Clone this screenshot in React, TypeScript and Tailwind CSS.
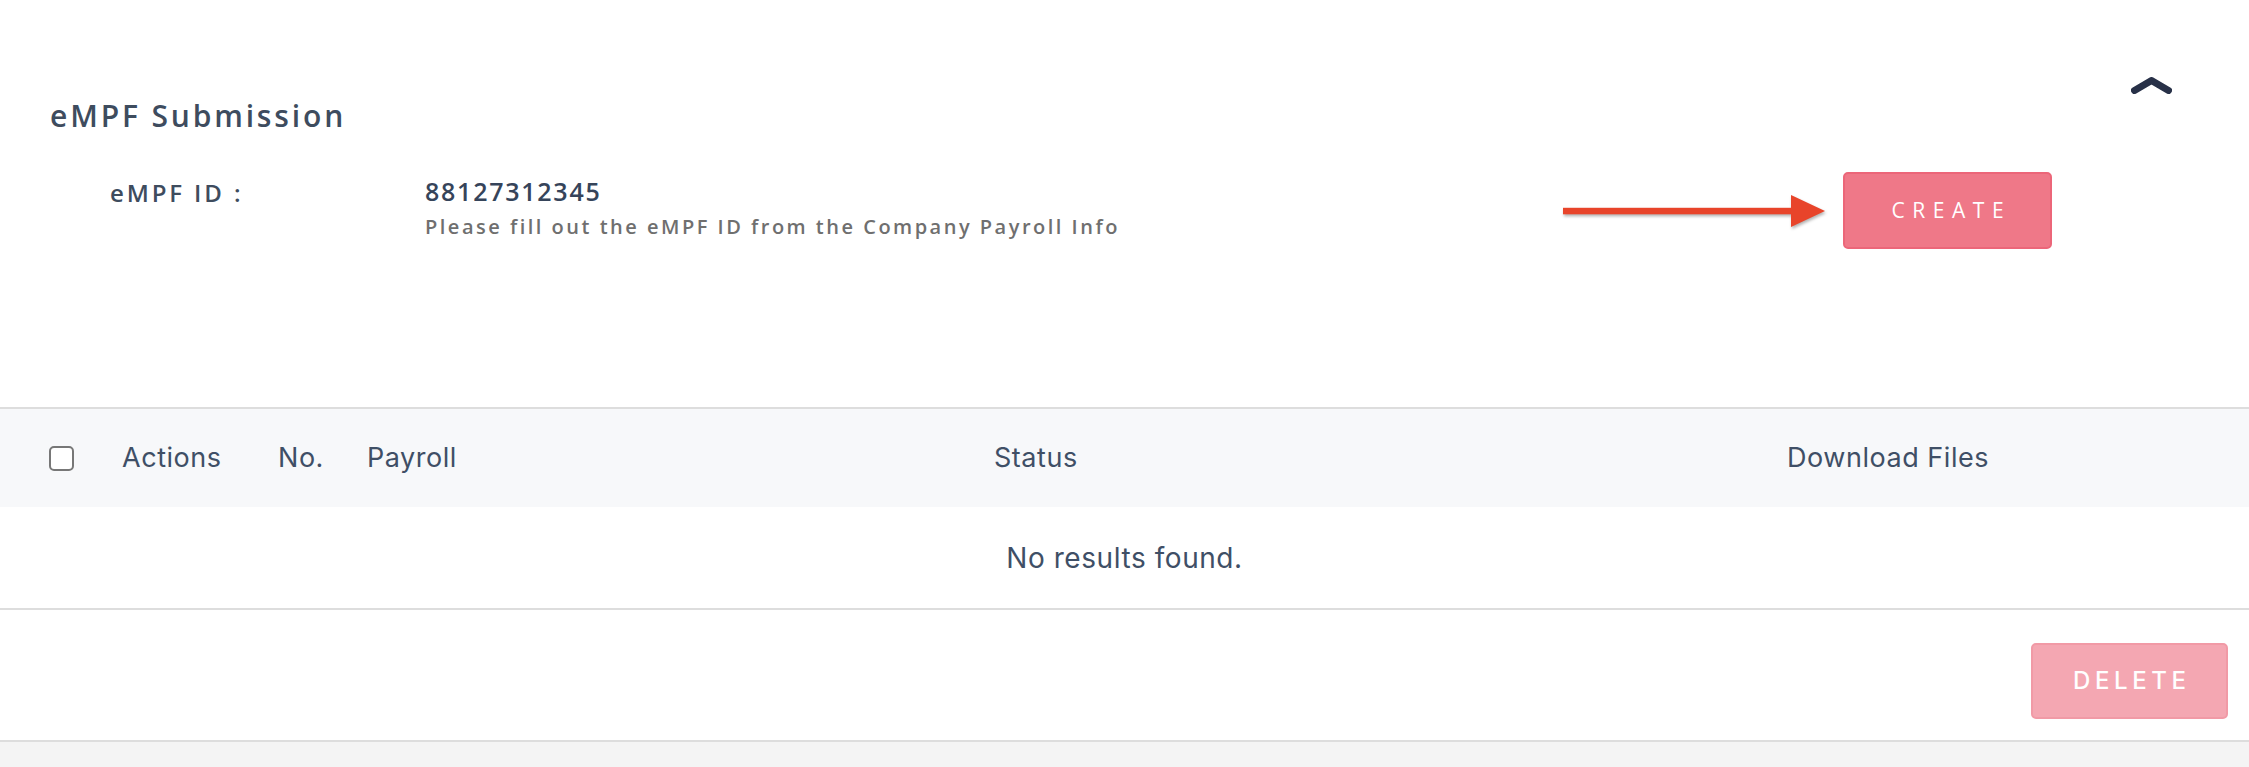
import React from 'react';

const headFont = { fontFamily: '"Open Sans", "Noto Sans", sans-serif' };

function ChevronUp() {
  return (
    <svg width="41" height="17" viewBox="0 0 41 17" className="mt-[7px]">
      <path
        d="M3.5 13.5 L20.5 3.5 L37.5 13.5"
        fill="none"
        stroke="#283148"
        strokeWidth="7"
        strokeLinecap="round"
        strokeLinejoin="round"
      />
    </svg>
  );
}

function PointerArrow() {
  return (
    <svg
      width="262"
      height="34"
      viewBox="0 0 262 34"
      className="drop-shadow-[1px_2px_1.5px_rgba(0,0,0,0.3)]"
    >
      <rect x="0" y="13.8" width="232" height="6.5" fill="#e8442a" />
      <polygon points="228,1 262,17 228,33" fill="#e8442a" />
    </svg>
  );
}

function SubmissionHeader() {
  return (
    <section className="pt-[70px] pb-[158px] font-['Open_Sans',sans-serif]">
      <div className="flex items-start justify-between pl-[50px] pr-[77px]">
        <h2 className="mt-[31px] text-[30px] leading-[30px] font-semibold tracking-[0.095em] text-[#3e4c5e]">
          eMPF Submission
        </h2>
        <ChevronUp />
      </div>

      <div className="mt-[41px] flex items-start pl-[110px] pr-[197px]">
        <div className="mt-[9px] w-[315px] text-[24px] leading-[24px] font-semibold tracking-[0.12em] text-[#3e4c5e]">
          eMPF ID :
        </div>
        <div className="mt-[7px] flex-1">
          <div className="text-[25px] leading-[24px] font-semibold tracking-[0.07em] text-[#36445a]">
            88127312345
          </div>
          <div className="mt-[14px] text-[20px] leading-[20px] font-semibold tracking-[0.125em] text-[#6f6f6f]">
            Please fill out the eMPF ID from the Company Payroll Info
          </div>
        </div>
        <div className="flex items-center gap-[18px]">
          <PointerArrow />
          <button className="flex h-[77px] w-[209px] items-center justify-center rounded-[5px] border-2 border-[#ec6679] bg-[#ef7888] text-[21px] font-normal text-white">
            <span className="mr-[-0.36em] tracking-[0.36em]">CREATE</span>
          </button>
        </div>
      </div>
    </section>
  );
}

const columns = ['Actions', 'No.', 'Payroll', 'Status', 'Download Files'];
const widths = ['w-[156px]', 'w-[89px]', 'w-[627px]', 'w-[793px]', 'flex-1'];

function SubmissionTable() {
  return (
    <div className="font-['Inter',sans-serif] text-[#3f4f66]">
      <div className="flex h-[100px] items-center border-t-2 border-[#dddddd] bg-[#f7f8fa] pl-[49px]">
        <span className="mr-[48px] block h-[25px] w-[25px] rounded-[5px] border-2 border-[#777777] bg-white" />
        {columns.map((col, i) => (
          <div key={col} className={`${widths[i]} text-[27px] leading-[30px] tracking-[0.02em]`}>
            {col}
          </div>
        ))}
      </div>
      <div className="flex h-[103px] items-center justify-center border-b-2 border-[#dddddd] bg-white">
        <span className="text-[28px] tracking-[0.02em]">No results found.</span>
      </div>
      <div className="flex h-[132px] items-start justify-end border-b-2 border-[#dddddd] bg-white pt-[33px] pr-[21px]">
        <button className="flex h-[76px] w-[197px] items-center justify-center rounded-[5px] border-2 border-[#f19aa6] bg-[#f4a7b2] text-[24px] font-medium text-white">
          <span className="mr-[-0.19em] tracking-[0.19em]">DELETE</span>
        </button>
      </div>
    </div>
  );
}

export default function App() {
  return (
    <div className="min-h-screen bg-[#f4f4f4]" style={headFont}>
      <div className="bg-white">
        <SubmissionHeader />
        <SubmissionTable />
      </div>
    </div>
  );
}
